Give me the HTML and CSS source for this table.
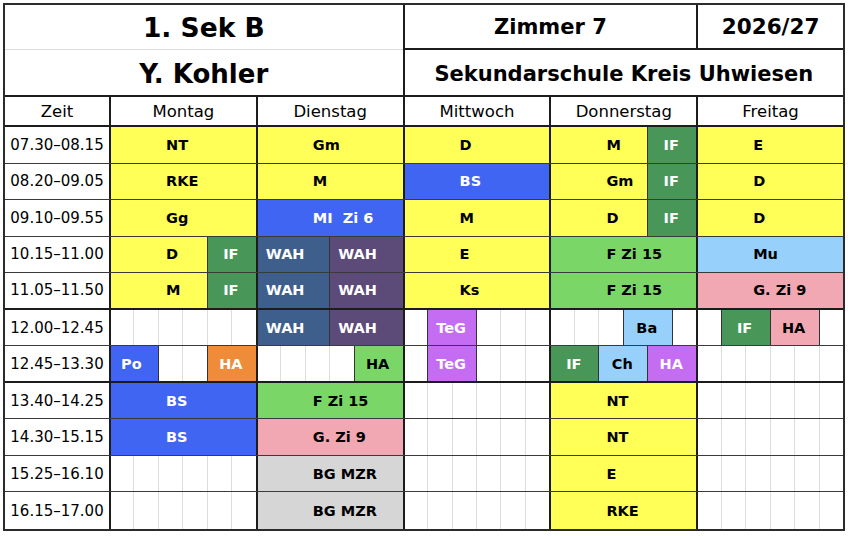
FILE: index.html
```html
<!DOCTYPE html>
<html lang="de">
<head>
<meta charset="utf-8">
<title>Stundenplan 1. Sek B</title>
<link rel="stylesheet" href="styles.css">
</head>
<body>
<div class="plan">
  <div class="row head1">
    <div class="cell title">1. Sek B</div>
    <div class="cell room">Zimmer 7</div>
    <div class="cell year">2026/27</div>
  </div>
  <div class="row head2">
    <div class="cell name">Y. Kohler</div>
    <div class="cell school">Sekundarschule Kreis Uhwiesen</div>
  </div>
  <div class="row days">
    <div class="cell dh zeit">Zeit</div>
    <div class="cell dh">Montag</div>
    <div class="cell dh">Dienstag</div>
    <div class="cell dh">Mittwoch</div>
    <div class="cell dh">Donnerstag</div>
    <div class="cell dh">Freitag</div>
  </div>

  <div class="row lr">
    <div class="cell t">07.30–08.15</div>
    <div class="cell l d s6 yel">NT</div>
    <div class="cell l d s6 yel">Gm</div>
    <div class="cell l d s6 yel">D</div>
    <div class="cell l d s4 yel">M</div><div class="cell l s2 ifg">IF</div>
    <div class="cell l d s6 yel">E</div>
  </div>
  <div class="row lr">
    <div class="cell t">08.20–09.05</div>
    <div class="cell l d s6 yel">RKE</div>
    <div class="cell l d s6 yel">M</div>
    <div class="cell l d s6 blu">BS</div>
    <div class="cell l d s4 yel">Gm</div><div class="cell l s2 ifg">IF</div>
    <div class="cell l d s6 yel">D</div>
  </div>
  <div class="row lr">
    <div class="cell t">09.10–09.55</div>
    <div class="cell l d s6 yel">Gg</div>
    <div class="cell l d s6 blu">MI&nbsp; Zi 6</div>
    <div class="cell l d s6 yel">M</div>
    <div class="cell l d s4 yel">D</div><div class="cell l s2 ifg">IF</div>
    <div class="cell l d s6 yel">D</div>
  </div>
  <div class="row lr">
    <div class="cell t">10.15–11.00</div>
    <div class="cell l d s4 yel">D</div><div class="cell l s2 ifg">IF</div>
    <div class="cell l d s3 wa1">WAH</div><div class="cell l s3 wa2">WAH</div>
    <div class="cell l d s6 yel">E</div>
    <div class="cell l d s6 grn">F Zi 15</div>
    <div class="cell l d s6 lbl">Mu</div>
  </div>
  <div class="row lr brk">
    <div class="cell t">11.05–11.50</div>
    <div class="cell l d s4 yel">M</div><div class="cell l s2 ifg">IF</div>
    <div class="cell l d s3 wa1">WAH</div><div class="cell l s3 wa2">WAH</div>
    <div class="cell l d s6 yel">Ks</div>
    <div class="cell l d s6 grn">F Zi 15</div>
    <div class="cell l d s6 pnk">G. Zi 9</div>
  </div>
  <div class="row lr">
    <div class="cell t">12.00–12.45</div>
    <div class="cell e d"></div><div class="cell e"></div><div class="cell e"></div><div class="cell e"></div><div class="cell e"></div><div class="cell e"></div>
    <div class="cell l d s3 wa1">WAH</div><div class="cell l s3 wa2">WAH</div>
    <div class="cell e d"></div><div class="cell l s2 pur">TeG</div><div class="cell e"></div><div class="cell e"></div><div class="cell e"></div>
    <div class="cell e d"></div><div class="cell e"></div><div class="cell e"></div><div class="cell l s2 lbl">Ba</div><div class="cell e"></div>
    <div class="cell e d"></div><div class="cell l s2 ifg">IF</div><div class="cell l s2 pnk">HA</div><div class="cell e"></div>
  </div>
  <div class="row lr brk">
    <div class="cell t">12.45–13.30</div>
    <div class="cell l d s2 blu po">Po</div><div class="cell e"></div><div class="cell e"></div><div class="cell l s2 org">HA</div>
    <div class="cell e d"></div><div class="cell e"></div><div class="cell e"></div><div class="cell e"></div><div class="cell l s2 grn">HA</div>
    <div class="cell e d"></div><div class="cell l s2 pur">TeG</div><div class="cell e"></div><div class="cell e"></div><div class="cell e"></div>
    <div class="cell l d s2 ifg">IF</div><div class="cell l s2 lbl">Ch</div><div class="cell l s2 pur">HA</div>
    <div class="cell e d"></div><div class="cell e"></div><div class="cell e"></div><div class="cell e"></div><div class="cell e"></div><div class="cell e"></div>
  </div>
  <div class="row lr">
    <div class="cell t">13.40–14.25</div>
    <div class="cell l d s6 blu">BS</div>
    <div class="cell l d s6 grn">F Zi 15</div>
    <div class="cell e d"></div><div class="cell e"></div><div class="cell e"></div><div class="cell e"></div><div class="cell e"></div><div class="cell e"></div>
    <div class="cell l d s6 yel">NT</div>
    <div class="cell e d"></div><div class="cell e"></div><div class="cell e"></div><div class="cell e"></div><div class="cell e"></div><div class="cell e"></div>
  </div>
  <div class="row lr">
    <div class="cell t">14.30–15.15</div>
    <div class="cell l d s6 blu">BS</div>
    <div class="cell l d s6 pnk">G. Zi 9</div>
    <div class="cell e d"></div><div class="cell e"></div><div class="cell e"></div><div class="cell e"></div><div class="cell e"></div><div class="cell e"></div>
    <div class="cell l d s6 yel">NT</div>
    <div class="cell e d"></div><div class="cell e"></div><div class="cell e"></div><div class="cell e"></div><div class="cell e"></div><div class="cell e"></div>
  </div>
  <div class="row lr">
    <div class="cell t">15.25–16.10</div>
    <div class="cell e d"></div><div class="cell e"></div><div class="cell e"></div><div class="cell e"></div><div class="cell e"></div><div class="cell e"></div>
    <div class="cell l d s6 gry">BG MZR</div>
    <div class="cell e d"></div><div class="cell e"></div><div class="cell e"></div><div class="cell e"></div><div class="cell e"></div><div class="cell e"></div>
    <div class="cell l d s6 yel">E</div>
    <div class="cell e d"></div><div class="cell e"></div><div class="cell e"></div><div class="cell e"></div><div class="cell e"></div><div class="cell e"></div>
  </div>
  <div class="row lr">
    <div class="cell t">16.15–17.00</div>
    <div class="cell e d"></div><div class="cell e"></div><div class="cell e"></div><div class="cell e"></div><div class="cell e"></div><div class="cell e"></div>
    <div class="cell l d s6 gry">BG MZR</div>
    <div class="cell e d"></div><div class="cell e"></div><div class="cell e"></div><div class="cell e"></div><div class="cell e"></div><div class="cell e"></div>
    <div class="cell l d s6 yel">RKE</div>
    <div class="cell e d"></div><div class="cell e"></div><div class="cell e"></div><div class="cell e"></div><div class="cell e"></div><div class="cell e"></div>
  </div>
</div>
</body>
</html>
```

FILE: styles.css
```css
* { box-sizing: border-box; }
html, body { margin: 0; background: #ffffff; }
body {
  padding: 3px;
  font-family: "DejaVu Sans", Verdana, sans-serif;
  color: #000;
}
.plan {
  width: 842px;
  border: 2px solid #2b2b2b;
}
.row {
  display: grid;
  grid-template-columns: 104px repeat(30, 1fr);
}
.cell {
  display: flex;
  align-items: center;
  min-width: 0;
  overflow: hidden;
  white-space: nowrap;
}

/* header */
.head1 { height: 45px; }
.head2 { height: 47px; border-bottom: 2px solid #1c1c1c; }
.days { height: 30px; border-bottom: 2px solid #1c1c1c; }

.title, .room, .year, .name, .school {
  justify-content: center;
  font-weight: bold;
}
.title { grid-column: span 13; font-size: 26.5px; border-bottom: 1px solid #dcdcdc; }
.room { grid-column: span 12; font-size: 21px; border-left: 2px solid #1c1c1c; border-bottom: 2px solid #1c1c1c; }
.year { grid-column: span 6; font-size: 21.5px; border-left: 2px solid #1c1c1c; border-bottom: 2px solid #1c1c1c; }
.name { grid-column: span 13; font-size: 26px; padding-top: 3px; }
.school { grid-column: span 18; font-size: 21px; padding-top: 2px; border-left: 2px solid #1c1c1c; }

.dh {
  grid-column: span 6;
  justify-content: center;
  font-size: 16.5px;
  border-left: 2px solid #1c1c1c;
}
.dh.zeit { grid-column: span 1; border-left: 0; }

/* lesson rows */
.lr { height: 36.55px; border-bottom: 1px solid #3a3a3a; }
.lr.brk { border-bottom: 2px solid #1c1c1c; }
.lr:last-child { border-bottom: 0; }

.t { justify-content: center; font-size: 15px; }

.e { border-left: 1px solid #dddddd; }
.l {
  border-left: 1px solid #333333;
  font-size: 14.5px;
  font-weight: bold;
}
.l + .e { border-left-color: #333333; }
.cell.d { border-left: 2px solid #1c1c1c; }

.s2 { grid-column: span 2; justify-content: center; padding-right: 2px; }
.s3 { grid-column: span 3; padding-left: 8px; }
.s4 { grid-column: span 4; padding-left: 55px; }
.s6 { grid-column: span 6; padding-left: 55px; }
.po { justify-content: flex-start; padding-left: 10px; }

/* colours */
.yel { background: #ffff57; }
.ifg { background: #499758; color: #fff; }
.blu { background: #3f65f2; color: #fff; }
.wa1 { background: #3e5e8c; color: #fff; }
.wa2 { background: #5c4b79; color: #fff; }
.grn { background: #7ad667; }
.lbl { background: #97d0fa; }
.pnk { background: #f2a8b3; }
.pur { background: #c46cf2; color: #fff; }
.org { background: #ef8c3a; color: #fff; }
.gry { background: #d6d6d6; }
```
